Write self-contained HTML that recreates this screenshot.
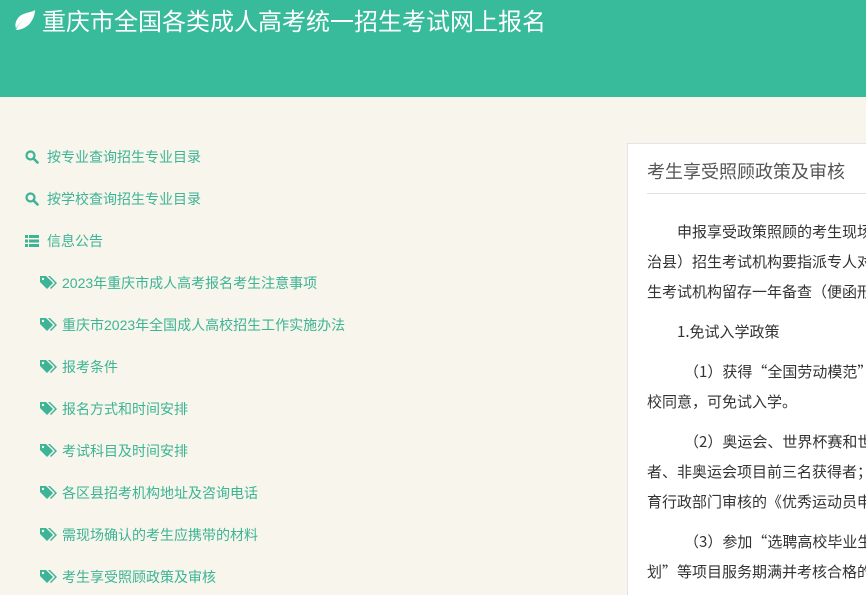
<!DOCTYPE html>
<html><head><meta charset="utf-8"><style>
html,body{margin:0;width:866px;height:595px;overflow:hidden}
body{background:#f8f5ec;font-family:"Liberation Sans","Noto Sans CJK SC",sans-serif;position:relative}
#w{position:absolute;left:0;top:0;width:866px;height:595px;overflow:hidden}
.hd{position:absolute;left:0;top:0;width:866px;height:97px;background:#37bb9a}
.hd .t{position:absolute;left:42px;top:6px;color:#fff;font-size:24px;line-height:34px;white-space:nowrap}
.hd svg{position:absolute;left:11px;top:8px}
.m{position:absolute;font-size:14px;color:#3cb495;white-space:nowrap;line-height:20px}
.m svg{position:absolute;top:3px}
.p{position:absolute;left:627px;top:143px;width:239px;height:452px;overflow:hidden;background:#fff;border-left:1px solid #e4e4e4;border-top:1px solid #e4e4e4}
.pt{position:absolute;left:19px;top:16px;font-size:18px;color:#555;line-height:24px;white-space:nowrap}
.hr{position:absolute;left:19px;top:49px;width:230px;height:1px;background:#e0e0e0}
.l{position:absolute;left:19px;font-size:15px;color:#333;white-space:nowrap;line-height:20px;font-family:"Noto Sans CJK SC",sans-serif}
</style></head><body><div id="w">
<div class="hd">
<svg width="26" height="26" viewBox="0 0 26 26"><path d="M3 24 C6 18 10 13 17 8 C11 12 7 17 5 22 C9 22 16 20 20 14 C24 8 24 3 24 2 C20 5 12 4 7 10 C4 14 4 18 5 20 Z" fill="#fff"/></svg>
<div class="t">重庆市全国各类成人高考统一招生考试网上报名</div>
</div>
<div class="m" style="left:25px;top:147px"><svg width="14" height="14" viewBox="0 0 14 14" style="left:0"><circle cx="5.5" cy="5.5" r="4" stroke="#3cb495" stroke-width="2.2" fill="none"/><path d="M8.5 8.5 L12.5 12.5" stroke="#3cb495" stroke-width="2.6" stroke-linecap="round"/></svg><span style="margin-left:22px">按专业查询招生专业目录</span></div>
<div class="m" style="left:25px;top:189px"><svg width="14" height="14" viewBox="0 0 14 14" style="left:0"><circle cx="5.5" cy="5.5" r="4" stroke="#3cb495" stroke-width="2.2" fill="none"/><path d="M8.5 8.5 L12.5 12.5" stroke="#3cb495" stroke-width="2.6" stroke-linecap="round"/></svg><span style="margin-left:22px">按学校查询招生专业目录</span></div>
<div class="m" style="left:25px;top:231px"><svg width="14" height="14" viewBox="0 0 14 14" style="left:0"><rect x="0" y="1" width="3" height="3" fill="#3cb495"/><rect x="4" y="1" width="10" height="3" fill="#3cb495"/><rect x="0" y="5.5" width="3" height="3" fill="#3cb495"/><rect x="4" y="5.5" width="10" height="3" fill="#3cb495"/><rect x="0" y="10" width="3" height="3" fill="#3cb495"/><rect x="4" y="10" width="10" height="3" fill="#3cb495"/></svg><span style="margin-left:22px">信息公告</span></div>
<div class="m" style="left:40px;top:273px"><svg width="18" height="14" viewBox="0 0 18 14" style="left:0"><path d="M0 0 H6 L13 7 L7 13 L0 6 Z" fill="#3cb495"/><circle cx="3" cy="3" r="1.2" fill="#f8f5ec"/><path d="M8 0 H10 L17 7 L11 13 L10 12 L15 7 Z" fill="#3cb495"/></svg><span style="margin-left:22px">2023年重庆市成人高考报名考生注意事项</span></div>
<div class="m" style="left:40px;top:315px"><svg width="18" height="14" viewBox="0 0 18 14" style="left:0"><path d="M0 0 H6 L13 7 L7 13 L0 6 Z" fill="#3cb495"/><circle cx="3" cy="3" r="1.2" fill="#f8f5ec"/><path d="M8 0 H10 L17 7 L11 13 L10 12 L15 7 Z" fill="#3cb495"/></svg><span style="margin-left:22px">重庆市2023年全国成人高校招生工作实施办法</span></div>
<div class="m" style="left:40px;top:357px"><svg width="18" height="14" viewBox="0 0 18 14" style="left:0"><path d="M0 0 H6 L13 7 L7 13 L0 6 Z" fill="#3cb495"/><circle cx="3" cy="3" r="1.2" fill="#f8f5ec"/><path d="M8 0 H10 L17 7 L11 13 L10 12 L15 7 Z" fill="#3cb495"/></svg><span style="margin-left:22px">报考条件</span></div>
<div class="m" style="left:40px;top:399px"><svg width="18" height="14" viewBox="0 0 18 14" style="left:0"><path d="M0 0 H6 L13 7 L7 13 L0 6 Z" fill="#3cb495"/><circle cx="3" cy="3" r="1.2" fill="#f8f5ec"/><path d="M8 0 H10 L17 7 L11 13 L10 12 L15 7 Z" fill="#3cb495"/></svg><span style="margin-left:22px">报名方式和时间安排</span></div>
<div class="m" style="left:40px;top:441px"><svg width="18" height="14" viewBox="0 0 18 14" style="left:0"><path d="M0 0 H6 L13 7 L7 13 L0 6 Z" fill="#3cb495"/><circle cx="3" cy="3" r="1.2" fill="#f8f5ec"/><path d="M8 0 H10 L17 7 L11 13 L10 12 L15 7 Z" fill="#3cb495"/></svg><span style="margin-left:22px">考试科目及时间安排</span></div>
<div class="m" style="left:40px;top:483px"><svg width="18" height="14" viewBox="0 0 18 14" style="left:0"><path d="M0 0 H6 L13 7 L7 13 L0 6 Z" fill="#3cb495"/><circle cx="3" cy="3" r="1.2" fill="#f8f5ec"/><path d="M8 0 H10 L17 7 L11 13 L10 12 L15 7 Z" fill="#3cb495"/></svg><span style="margin-left:22px">各区县招考机构地址及咨询电话</span></div>
<div class="m" style="left:40px;top:525px"><svg width="18" height="14" viewBox="0 0 18 14" style="left:0"><path d="M0 0 H6 L13 7 L7 13 L0 6 Z" fill="#3cb495"/><circle cx="3" cy="3" r="1.2" fill="#f8f5ec"/><path d="M8 0 H10 L17 7 L11 13 L10 12 L15 7 Z" fill="#3cb495"/></svg><span style="margin-left:22px">需现场确认的考生应携带的材料</span></div>
<div class="m" style="left:40px;top:567px"><svg width="18" height="14" viewBox="0 0 18 14" style="left:0"><path d="M0 0 H6 L13 7 L7 13 L0 6 Z" fill="#3cb495"/><circle cx="3" cy="3" r="1.2" fill="#f8f5ec"/><path d="M8 0 H10 L17 7 L11 13 L10 12 L15 7 Z" fill="#3cb495"/></svg><span style="margin-left:22px">考生享受照顾政策及审核</span></div>

<div class="p">
<div class="pt">考生享受照顾政策及审核</div>
<div class="hr"></div>
<div class="l" style="top:78px;left:49px">申报享受政策照顾的考生现场</div>
<div class="l" style="top:108px">治县）招生考试机构要指派专人对</div>
<div class="l" style="top:138px">生考试机构留存一年备查（便函形</div>
<div class="l" style="top:178px;left:49px">1.免试入学政策</div>
<div class="l" style="top:218px;left:56px">（1）获得“全国劳动模范”</div>
<div class="l" style="top:248px">校同意，可免试入学。</div>
<div class="l" style="top:288px;left:56px">（2）奥运会、世界杯赛和世</div>
<div class="l" style="top:318px">者、非奥运会项目前三名获得者；</div>
<div class="l" style="top:348px">育行政部门审核的《优秀运动员申</div>
<div class="l" style="top:388px;left:56px">（3）参加“选聘高校毕业生</div>
<div class="l" style="top:418px">划”等项目服务期满并考核合格的</div>
</div>
</div></body></html>
